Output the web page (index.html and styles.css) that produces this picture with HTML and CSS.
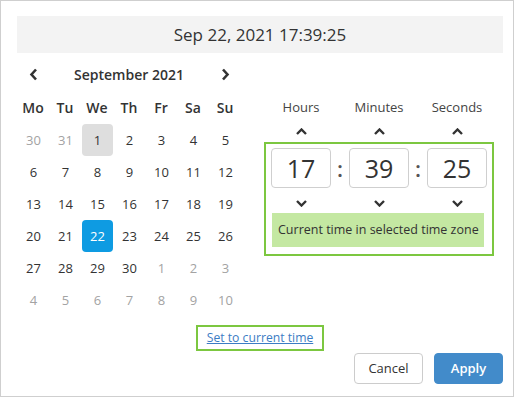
FILE: index.html
```html
<!DOCTYPE html>
<html lang="en">
<head>
	<meta charset="UTF-8">
	<meta name="viewport" content="width=device-width, initial-scale=1.0">
	<title>Date time picker</title>
	<link rel="stylesheet" href="styles.css">
</head>
<body>
<div class="picker">
	<div class="display">Sep 22, 2021 17:39:25</div>

	<div class="body">
		<div class="calendar">
			<div class="nav">
				<a class="navBtn" href="#"><svg width="9" height="13" viewBox="0 0 9 13"><path d="M7 1.5 2.5 6.5 7 11.5" fill="none" stroke="#333" stroke-width="2.6"/></svg></a>
				<div class="month">September 2021</div>
				<a class="navBtn" href="#"><svg width="9" height="13" viewBox="0 0 9 13"><path d="M2 1.5 6.5 6.5 2 11.5" fill="none" stroke="#333" stroke-width="2.6"/></svg></a>
			</div>
			<div class="days week">
				<span>Mo</span><span>Tu</span><span>We</span><span>Th</span><span>Fr</span><span>Sa</span><span>Su</span>
			</div>
			<div class="days" id="days"></div>
		</div>

		<div class="time">
			<div class="row labels"><span>Hours</span><span>Minutes</span><span>Seconds</span></div>
			<div class="row arrows up">
				<span class="chev"><svg width="11" height="7" viewBox="0 0 11 7"><path d="M1 6 5.5 1.5 10 6" fill="none" stroke="#333" stroke-width="2.4"/></svg></span>
				<span class="chev"><svg width="11" height="7" viewBox="0 0 11 7"><path d="M1 6 5.5 1.5 10 6" fill="none" stroke="#333" stroke-width="2.4"/></svg></span>
				<span class="chev"><svg width="11" height="7" viewBox="0 0 11 7"><path d="M1 6 5.5 1.5 10 6" fill="none" stroke="#333" stroke-width="2.4"/></svg></span>
			</div>
			<div class="zone">
				<div class="fields">
					<div class="field">17</div>
					<div class="colon">:</div>
					<div class="field">39</div>
					<div class="colon">:</div>
					<div class="field">25</div>
				</div>
				<div class="arrows down">
					<span class="chev"><svg width="11" height="7" viewBox="0 0 11 7"><path d="M1 1 5.5 5.5 10 1" fill="none" stroke="#333" stroke-width="2.4"/></svg></span>
					<span class="chev"><svg width="11" height="7" viewBox="0 0 11 7"><path d="M1 1 5.5 5.5 10 1" fill="none" stroke="#333" stroke-width="2.4"/></svg></span>
					<span class="chev"><svg width="11" height="7" viewBox="0 0 11 7"><path d="M1 1 5.5 5.5 10 1" fill="none" stroke="#333" stroke-width="2.4"/></svg></span>
				</div>
				<div class="status">Current time in selected time zone</div>
			</div>
		</div>
	</div>

	<div class="current"><a class="nowLink" href="#">Set to current time</a></div>

	<div class="buttons">
		<a class="btn cancel" href="#">Cancel</a>
		<a class="btn apply" href="#">Apply</a>
	</div>
</div>

<script>
	// 6 weeks starting on Monday Aug 30, 2021
	const days = document.getElementById("days");
	const prev = [30, 31];
	let html = "";
	prev.forEach(d => { html += '<span class="other">' + d + '</span>'; });
	for (let d = 1; d <= 30; d++) {
		let cls = "";
		if (d === 1) cls = "today";
		if (d === 22) cls = "selected";
		html += '<span class="' + cls + '">' + d + '</span>';
	}
	for (let d = 1; d <= 10; d++) {
		html += '<span class="other">' + d + '</span>';
	}
	days.innerHTML = html;
</script>
</body>
</html>
```

FILE: styles.css
```css
html, body {
	margin: 0;
	padding: 0;
	background: #fff;
	font-family: "Open Sans", "Noto Sans", sans-serif;
	color: #333;
}

a {
	text-decoration: none;
	color: inherit;
}

.picker {
	box-sizing: border-box;
	width: 514px;
	height: 397px;
	border: 1px solid #cfcfcf;
	padding: 15px 10px 0 16px;
}

.display {
	height: 37px;
	line-height: 37px;
	background: #f3f3f3;
	text-align: center;
	font-size: 17px;
	color: #333;
}

.body {
	display: flex;
	margin-top: 5px;
}

.calendar {
	width: 224px;
}

.nav {
	display: flex;
	align-items: center;
	height: 32px;
}

.navBtn {
	width: 32px;
	display: flex;
	justify-content: center;
}

.month {
	flex: 1;
	text-align: center;
	font-size: 14px;
	font-weight: 600;
}

.days {
	display: grid;
	grid-template-columns: repeat(7, 32px);
	grid-auto-rows: 32px;
	font-size: 13px;
}

.days span {
	display: flex;
	align-items: center;
	justify-content: center;
	margin: 0 0 0 1px;
	border-radius: 4px;
}

.days.week {
	grid-auto-rows: 34px;
	font-weight: 600;
	font-size: 14px;
}

.days.week span {
	margin: 0;
}

.days .other {
	color: #a3a3a3;
}

.days .today {
	background: #dedede;
}

.days .selected {
	background: #0e9be2;
	color: #fff;
}

.time {
	width: 230px;
	margin-left: 23px;
}

.row {
	display: flex;
	padding: 0 7px;
	justify-content: space-between;
}

.labels {
	height: 26px;
	margin-top: 36px;
	align-items: center;
	font-size: 13px;
	color: #444;
}

.labels span,
.arrows .chev {
	width: 60px;
	display: flex;
	justify-content: center;
}

.arrows {
	display: flex;
	justify-content: space-between;
}

.arrows.up {
	height: 22px;
	align-items: center;
}

.zone {
	border: 2px solid #7cc740;
	padding: 4px 5px 7px;
}

.fields {
	display: flex;
	align-items: center;
}

.field {
	box-sizing: border-box;
	width: 60px;
	height: 40px;
	line-height: 38px;
	border: 1px solid #cfcfcf;
	border-radius: 4px;
	text-align: center;
	font-size: 25px;
	color: #333;
}

.colon {
	width: 18px;
	text-align: center;
	font-size: 22px;
	font-weight: 600;
	color: #555;
	line-height: 38px;
}

.arrows.down {
	height: 25px;
	padding-top: 6px;
	box-sizing: border-box;
	align-items: center;
}

.status {
	margin: 0 3px 0 1px;
	height: 34px;
	line-height: 34px;
	background: #c4e8a2;
	font-size: 12.5px;
	padding-left: 6px;
	color: #333;
}

.current {
	margin-top: 9px;
	text-align: center;
}

.nowLink {
	display: inline-block;
	border: 2px solid #7cc740;
	padding: 0 9px;
	height: 22px;
	line-height: 22px;
	color: #3b7cc4;
	text-decoration: underline;
	font-size: 12.2px;
}

.buttons {
	display: flex;
	justify-content: flex-end;
	margin-top: 2px;
}

.btn {
	box-sizing: border-box;
	width: 69px;
	height: 31px;
	line-height: 29px;
	border-radius: 4px;
	text-align: center;
	font-size: 13px;
	margin-left: 11px;
}

.cancel {
	border: 1px solid #cccccc;
	color: #333;
}

.apply {
	border: 1px solid #428bca;
	background: #428bca;
	color: #fff;
	font-weight: 600;
}
```
